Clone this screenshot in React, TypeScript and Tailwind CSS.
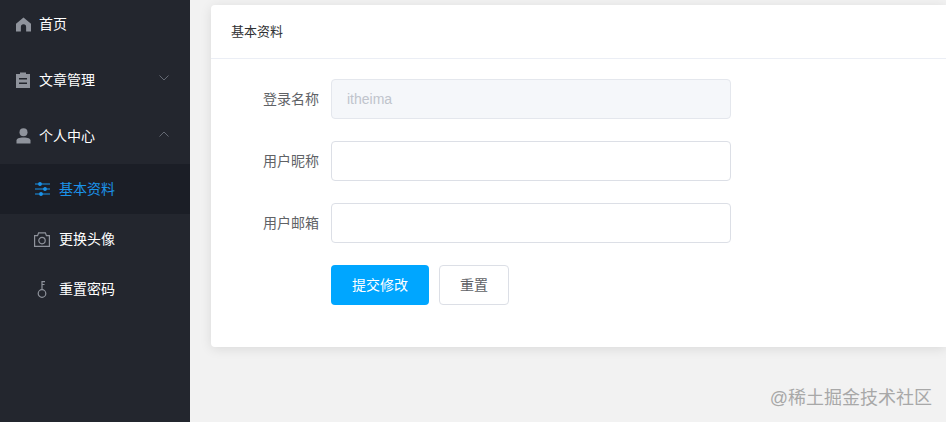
import React from 'react'

const CJK = 'font-["Liberation_Sans","Noto_Sans_CJK_SC",sans-serif]'

function HomeIcon() {
  return (
    <svg width="15" height="15" viewBox="0 0 16 16" className="text-[#8f939c]" fill="currentColor">
      <path d="M8 0.5 16 7.2V15.5H10.8V10.6A2.8 2.8 0 0 0 5.2 10.6V15.5H0V7.2Z" />
    </svg>
  )
}

function ClipboardIcon() {
  return (
    <svg width="14" height="16" viewBox="0 0 14 16" className="text-[#8f939c]" fill="currentColor">
      <path d="M4 0.5h6V2h4v14H0V2h4Z M3 6v1.5h8V6Z M3 10.5V12h8v-1.5Z" fillRule="evenodd" />
    </svg>
  )
}

function UserIcon() {
  return (
    <svg width="15" height="16" viewBox="0 0 15 16" className="text-[#8f939c]" fill="currentColor">
      <circle cx="7.5" cy="4.2" r="4" />
      <path d="M0.5 15.5V12.6C0.5 10.4 3 9.4 7.5 9.4S14.5 10.4 14.5 12.6V15.5Z" />
    </svg>
  )
}

function Chevron({ up }: { up?: boolean }) {
  return (
    <svg width="12" height="8" viewBox="0 0 12 8" fill="none" stroke="#646973" strokeWidth="1">
      <path d={up ? 'M1.5 6.5 6 2l4.5 4.5' : 'M1.5 1.5 6 6l4.5-4.5'} />
    </svg>
  )
}

function SlidersIcon() {
  return (
    <svg width="15" height="14" viewBox="0 0 15 14" stroke="#1b93ea" fill="#1b93ea" strokeWidth="1.2">
      <path d="M0 2h15M0 7h15M0 12h15" fill="none" />
      <circle cx="5" cy="2" r="1.3" />
      <circle cx="10" cy="7" r="1.3" />
      <circle cx="6" cy="12" r="1.3" />
    </svg>
  )
}

function CameraIcon() {
  return (
    <svg width="16" height="15" viewBox="0 0 16 15" fill="none" stroke="#8f939c" strokeWidth="1.2">
      <path d="M0.6 3.6h3L4.6 0.8h6.8l1 2.8h3v10.8H0.6Z" />
      <circle cx="8" cy="8.6" r="3.2" />
    </svg>
  )
}

function KeyIcon() {
  return (
    <svg width="10" height="17" viewBox="0 0 10 17" fill="none" stroke="#8f939c" strokeWidth="1.2">
      <circle cx="5" cy="12.5" r="3.8" />
      <path d="M5 8.7V0.6h3M5 3.5h2.5" />
    </svg>
  )
}

function MenuItem({ icon, label, arrow }: { icon: React.ReactNode; label: string; arrow?: 'up' | 'down' }) {
  return (
    <div className="h-14 flex items-center pl-[15px] pr-[20px]">
      <span className="w-4 flex justify-center">{icon}</span>
      <span className="ml-2 text-[14px] text-white">{label}</span>
      {arrow && <span className="ml-auto flex -mt-1"><Chevron up={arrow === 'up'} /></span>}
    </div>
  )
}

function SubItem({ icon, label, active }: { icon: React.ReactNode; label: string; active?: boolean }) {
  return (
    <div className={`h-[50px] flex items-center pl-[34px] ${active ? 'bg-[#1b1e26]' : ''}`}>
      <span className="w-4 flex justify-center">{icon}</span>
      <span className={`ml-[9px] text-[14px] ${active ? 'text-[#1b93ea]' : 'text-white'}`}>{label}</span>
    </div>
  )
}

function Field({ label, value, disabled }: { label: string; value?: string; disabled?: boolean }) {
  return (
    <div className="flex items-center mb-[22px]">
      <label className="w-[120px] pr-3 text-right text-[14px] text-[#606266]">{label}</label>
      <div
        className={`w-[400px] h-10 rounded border flex items-center px-[15px] text-[14px] ${
          disabled ? 'bg-[#f5f7fa] border-[#e4e7ed] text-[#c0c4cc]' : 'bg-white border-[#dcdfe6]'
        }`}
      >
        {value}
      </div>
    </div>
  )
}

export default function App() {
  return (
    <div className={`relative flex h-[422px] w-[946px] overflow-hidden bg-[#f2f2f2] ${CJK}`}>
      <aside className="w-[190px] shrink-0 bg-[#23262e] overflow-hidden">
        <div className="-mt-1">
          <MenuItem icon={<HomeIcon />} label="首页" />
          <MenuItem icon={<ClipboardIcon />} label="文章管理" arrow="down" />
          <MenuItem icon={<UserIcon />} label="个人中心" arrow="up" />
          <SubItem icon={<SlidersIcon />} label="基本资料" active />
          <SubItem icon={<CameraIcon />} label="更换头像" />
          <SubItem icon={<KeyIcon />} label="重置密码" />
        </div>
      </aside>
      <main className="flex-1 min-w-0 pl-[21px] pt-[5px]">
        <div className="h-[342px] bg-white rounded-l shadow-[0_2px_12px_0_rgba(0,0,0,0.1)]">
          <div className="h-[54px] border-b border-[#ebeef5] flex items-center pl-5 text-[13px] text-[#303133]">基本资料</div>
          <div className="pt-5">
            <Field label="登录名称" value="itheima" disabled />
            <Field label="用户昵称" />
            <Field label="用户邮箱" />
            <div className="flex pl-[120px] gap-[10px]">
              <button className="w-[98px] h-10 rounded bg-[#00a6ff] text-white text-[14px]">提交修改</button>
              <button className="w-[70px] h-10 rounded bg-white border border-[#dcdfe6] text-[#606266] text-[14px]">重置</button>
            </div>
          </div>
        </div>
      </main>
      <div className="absolute right-[14px] top-[386px] text-[18px] leading-[24px] text-[#a8a8a8]">@稀土掘金技术社区</div>
    </div>
  )
}
